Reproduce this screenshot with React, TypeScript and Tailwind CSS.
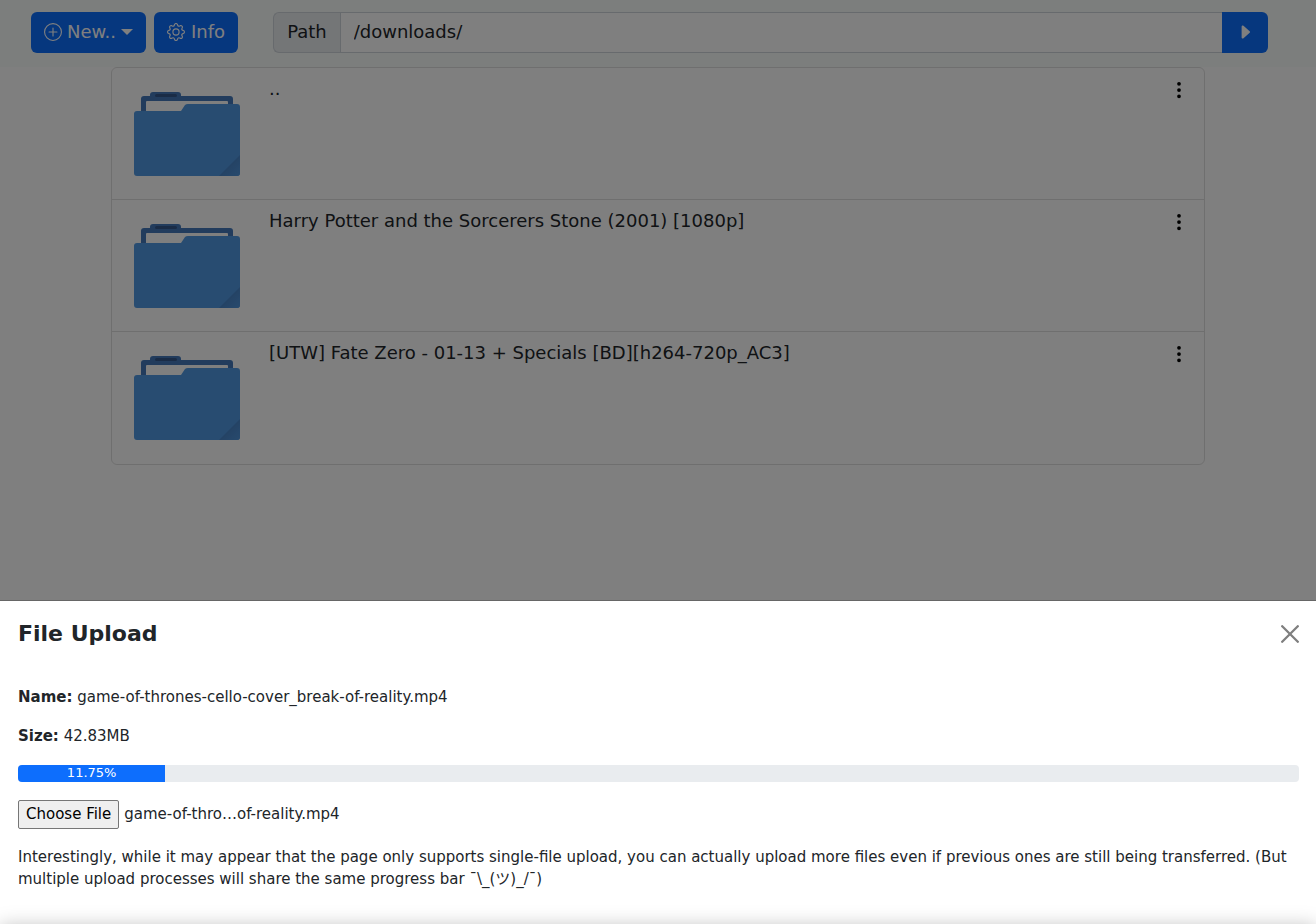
import { useEffect, useRef } from "react";
import {
  BsCaretRightFill,
  BsGear,
  BsPlusCircle,
  BsThreeDotsVertical,
} from "react-icons/bs";

const entries = [
  "..",
  "Harry Potter and the Sorcerers Stone (2001) [1080p]",
  "[UTW] Fate Zero - 01-13 + Specials [BD][h264-720p_AC3]",
];

const upload = {
  name: "game-of-thrones-cello-cover_break-of-reality.mp4",
  size: "42.83MB",
  percent: 11.75,
};

function FolderIcon() {
  return (
    <svg viewBox="0 0 108 86" className="h-[86px] w-[108px]" aria-hidden="true">
      <defs>
        <linearGradient id="fold" x1="0" y1="0" x2="1" y2="1">
          <stop offset="0.45" stopColor="#4884c8" />
          <stop offset="1" stopColor="#5095dc" />
        </linearGradient>
      </defs>
      <path
        fill="#4479bb"
        d="M8 28V8q0-3 3-3h6V4q0-3 3-3h25q3 0 3 3v1h49q3 0 3 3v16h-5V11q0-1-1-1H14q-1 0-1 1v17z"
      />
      <rect x="22" y="3" width="22" height="3" rx="1.5" fill="#34588c" />
      <path
        fill="#5199e2"
        d="M1 23q0-3 3-3h44l4-6q1-1 3-1h49q3 0 3 3v66q0 3-3 3H4q-3 0-3-3z"
      />
      <path fill="url(#fold)" d="M107 64v18q0 3-3 3H86z" />
    </svg>
  );
}

function Toolbar() {
  return (
    <nav className="flex h-[67px] items-center bg-[#f8fcfa] pr-12 pb-[2px] pl-[31px]">
      <button
        type="button"
        className="flex h-[41px] items-center gap-[5px] rounded-md bg-[#0d6efd] px-[13px] pb-[2px] text-white"
      >
        <BsPlusCircle className="size-[18px]" />
        <span>New..</span>
        <span className="border-x-[6px] border-t-[6px] border-x-transparent border-t-white" />
      </button>
      <button
        type="button"
        className="ml-2 flex h-[41px] items-center gap-[6px] rounded-md bg-[#0d6efd] px-[13px] pb-[2px] text-white"
      >
        <BsGear className="size-[18px]" />
        <span>Info</span>
      </button>
      <form className="ml-[35px] flex h-[41px] min-w-0 flex-1">
        <label
          htmlFor="path"
          className="flex items-center rounded-l-md border border-r-0 border-[#ced4da] bg-[#e9ecef] px-[13px] pb-[2px]"
        >
          Path
        </label>
        <input
          id="path"
          type="text"
          defaultValue="/downloads/"
          className="min-w-0 flex-1 border border-r-0 border-[#ced4da] bg-white px-[13px] pb-[2px]"
        />
        <button
          type="button"
          aria-label="Go"
          className="flex w-[46px] items-center justify-center rounded-r-md bg-[#0d6efd] pb-[2px] text-white"
        >
          <BsCaretRightFill className="size-[18px]" />
        </button>
      </form>
    </nav>
  );
}

function FileList() {
  return (
    <ul className="mx-auto w-5/6 max-w-[1094px] divide-y divide-[#dfdfdf] rounded-md border border-[#dfdfdf] bg-white">
      {entries.map((name) => (
        <li key={name} className="flex h-[132px] items-start pr-[15px] pl-[21px]">
          <div className="pt-[23px]">
            <FolderIcon />
          </div>
          <span className="ml-7 flex-1 pt-2 leading-[26px]">{name}</span>
          <button type="button" aria-label={`Options for ${name}`} className="pt-3">
            <BsThreeDotsVertical className="size-5 text-black" />
          </button>
        </li>
      ))}
    </ul>
  );
}

function UploadPanel() {
  const input = useRef<HTMLInputElement>(null);

  useEffect(() => {
    if (!input.current) return;
    const transfer = new DataTransfer();
    transfer.items.add(new File([""], upload.name, { type: "video/mp4" }));
    input.current.files = transfer.files;
  }, []);

  return (
    <section
      role="dialog"
      aria-labelledby="upload-title"
      className="fixed inset-x-0 bottom-0 border-t border-[#666] bg-white pr-[17px] pb-[34px] pl-[18px] text-[15px] leading-[22px]"
    >
      <header className="flex items-center justify-between pt-[18px]">
        <h2 id="upload-title" className="text-[22px] leading-[30px] font-bold">
          File Upload
        </h2>
        <button type="button" aria-label="Close">
          <svg viewBox="0 0 18 18" className="size-[18px]" aria-hidden="true">
            <path
              d="M1.2 1.2 16.8 16.8M16.8 1.2 1.2 16.8"
              stroke="#7f7f7f"
              strokeWidth="2.3"
              strokeLinecap="round"
            />
          </svg>
        </button>
      </header>
      <p className="mt-[37px]">
        <b>Name:</b> {upload.name}
      </p>
      <p className="mt-[17px]">
        <b>Size:</b> {upload.size}
      </p>
      <div
        role="progressbar"
        aria-label="Upload progress"
        aria-valuenow={upload.percent}
        aria-valuemin={0}
        aria-valuemax={100}
        className="mt-[18px] h-[17px] overflow-hidden rounded-[4px] bg-[#e9ecef]"
      >
        <div
          className="flex h-full items-center justify-center bg-[#0d6efd] pb-[2px] text-[13px] text-white"
          style={{ width: "11.5%" }}
        >
          {upload.percent}%
        </div>
      </div>
      <input
        ref={input}
        type="file"
        aria-label="File to upload"
        className="mt-[18px] block h-[29px] w-[325px] file:mr-[5px] file:h-[29px] file:rounded-[2px] file:border file:border-[#767676] file:bg-[#efefef] file:px-[7px] file:pb-[2px] file:text-black"
      />
      <p className="mt-[17px]">
        Interestingly, while it may appear that the page only supports
        single-file upload, you can actually upload more files even if previous
        ones are still being transferred. (But multiple upload processes will
        share the same progress bar ¯\_(ツ)_/¯)
      </p>
    </section>
  );
}

export default function App() {
  return (
    <div className="min-h-screen bg-white font-['DejaVu_Sans','Noto_Sans_CJK_JP',sans-serif] text-[18px] text-[#212529]">
      <Toolbar />
      <FileList />
      <div className="fixed inset-0 bg-black/50" />
      <UploadPanel />
      <div className="fixed inset-x-0 top-full h-80 shadow-[0_2px_18px_rgba(0,0,0,0.25)]" />
    </div>
  );
}
